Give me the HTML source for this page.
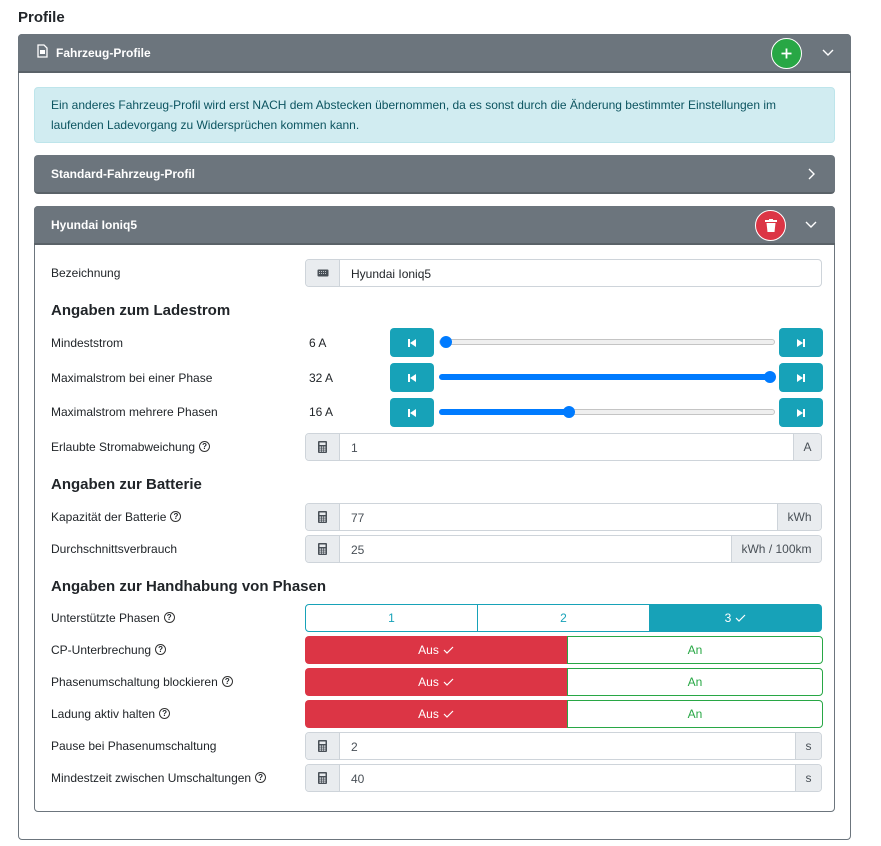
<!DOCTYPE html>
<html><head><meta charset="utf-8">
<style>
*{box-sizing:border-box;margin:0;padding:0}
body{width:881px;height:846px;background:#fff;font-family:"Liberation Sans",Arial,sans-serif;color:#212529;position:relative;overflow:hidden}
.a{position:absolute}
.h{background:#6c757d;color:#fff;font-weight:bold;font-size:12px;border-bottom:2px solid #5a6268}
.lbl{position:absolute;left:51px;font-size:12px;line-height:14px}
.sec{position:absolute;left:51px;font-size:15px;font-weight:bold;line-height:18px}
.ig{position:absolute;left:305px;width:517px;height:28px;border:1px solid #ced4da;border-radius:4px;background:#fff;font-size:12px;overflow:hidden}
.pre{position:absolute;left:0;top:0;bottom:0;width:34px;background:#e9ecef;border-right:1px solid #ced4da;display:flex;align-items:center;justify-content:center}
.val{position:absolute;left:45px;top:7px;color:#495057}
.app{position:absolute;right:0;top:0;bottom:0;background:#e9ecef;border-left:1px solid #ced4da;color:#495057;display:flex;align-items:center;justify-content:center}
.btn{position:absolute;width:44px;height:29px;background:#17a2b8;border-radius:4px;display:flex;align-items:center;justify-content:center}
.track{position:absolute;left:439px;width:336px;height:6px;border-radius:3px;background:#efefef;border:1px solid #c4c4c4}
.fill{position:absolute;left:-1px;top:-1px;height:6px;border-radius:3px;background:#007bff}
.knob{position:absolute;top:-4px;width:12px;height:12px;border-radius:50%;background:#007bff}
.q{position:relative;top:-1px;display:inline-block;width:11px;height:11px;border:1.2px solid #333;border-radius:50%;font-size:8px;line-height:9px;text-align:center;font-weight:bold;vertical-align:middle;margin-left:4px}
.seg{position:absolute;height:28px;font-size:12px;display:flex;align-items:center;justify-content:center}
.aus{left:305px;width:262px;background:#dc3545;color:#fff;border-radius:4px 0 0 4px}
.an{left:567px;width:256px;border:1px solid #28a745;color:#28a745;border-radius:0 4px 4px 0;background:#fff}
.ck{margin-left:4px}
</style></head><body>
<div class="a" style="left:18px;top:9px;font-size:15px;font-weight:bold">Profile</div>
<div class="a" style="left:18px;top:34px;width:833px;height:806px;border:1px solid #6c757d;border-radius:4px"></div>
<div class="a h" style="left:18px;top:34px;width:833px;height:39px;border-radius:4px 4px 0 0">
 <svg class="a" style="left:19px;top:10px" width="11" height="14" viewBox="0 0 11 14"><path d="M1 1h6l3 3v9H1z" fill="none" stroke="#fff" stroke-width="1.3"/><rect x="3" y="6" width="5" height="4" fill="#fff"/></svg>
 <span class="a" style="left:38px;top:12px">Fahrzeug-Profile</span>
 <div class="a" style="left:753px;top:4px;width:31px;height:31px;border-radius:50%;background:#28a745;border:1px solid #fff"><svg class="a" style="left:8px;top:8px" width="13" height="13"><path d="M6.5 1.5v10M1.5 6.5h10" stroke="#fff" stroke-width="1.8"/></svg></div>
 <svg class="a" style="left:804px;top:15px" width="12" height="8"><path d="M1 1l5 5 5-5" fill="none" stroke="#fff" stroke-width="1.4"/></svg>
</div>
<div class="a" style="left:34px;top:87px;width:801px;height:56px;background:#d1ecf1;border:1px solid #bee5eb;border-radius:4px;color:#0c5460;font-size:12px;line-height:20px;padding:7px 16px">Ein anderes Fahrzeug-Profil wird erst NACH dem Abstecken übernommen, da es sonst durch die Änderung bestimmter Einstellungen im laufenden Ladevorgang zu Widersprüchen kommen kann.</div>
<div class="a h" style="left:34px;top:155px;width:801px;height:39px;border-radius:4px">
 <span class="a" style="left:17px;top:12px">Standard-Fahrzeug-Profil</span>
 <svg class="a" style="left:774px;top:13px" width="8" height="12"><path d="M1 1l5 5-5 5" fill="none" stroke="#fff" stroke-width="1.4"/></svg>
</div>
<div class="a" style="left:34px;top:206px;width:801px;height:606px;border:1px solid #6c757d;border-radius:4px"></div>
<div class="a h" style="left:34px;top:206px;width:801px;height:39px;border-radius:4px 4px 0 0">
 <span class="a" style="left:17px;top:12px">Hyundai Ioniq5</span>
 <div class="a" style="left:721px;top:4px;width:31px;height:31px;border-radius:50%;background:#dc3545;border:1px solid #fff"><svg class="a" style="left:9px;top:8px" width="12" height="14"><rect x="0" y="1" width="12" height="2" fill="#fff"/><rect x="4" y="0" width="4" height="2" fill="#fff"/><path d="M1.5 4h9l-1 9h-7z" fill="#fff"/></svg></div>
 <svg class="a" style="left:771px;top:15px" width="12" height="8"><path d="M1 1l5 5 5-5" fill="none" stroke="#fff" stroke-width="1.4"/></svg>
</div>

<div class="lbl" style="top:266px">Bezeichnung</div>
<div class="ig" style="top:259px"><div class="pre"><svg width="12" height="8"><rect x=".5" y=".5" width="11" height="7" rx="1" fill="#495057"/><path d="M2 2.5h8M2 4.5h8" stroke="#e9ecef" stroke-width=".7" stroke-dasharray="1 1"/></svg></div><span class="val" style="color:#212529">Hyundai Ioniq5</span></div>

<div class="sec" style="top:302px">Angaben zum Ladestrom</div>

<div class="lbl" style="top:336px">Mindeststrom</div><div class="lbl" style="left:309px;top:336px">6 A</div>
<div class="lbl" style="top:371px">Maximalstrom bei einer Phase</div><div class="lbl" style="left:309px;top:371px">32 A</div>
<div class="lbl" style="top:405px">Maximalstrom mehrere Phasen</div><div class="lbl" style="left:309px;top:405px">16 A</div>

<div class="btn" style="left:390px;top:328px"><svg width="8" height="8"><rect x="0" y="0" width="2" height="8" fill="#fff"/><path d="M8 0v8L2 4z" fill="#fff"/></svg></div>
<div class="btn" style="left:779px;top:328px"><svg width="8" height="8"><rect x="6" y="0" width="2" height="8" fill="#fff"/><path d="M0 0v8l6-4z" fill="#fff"/></svg></div>
<div class="track" style="top:339px"><div class="knob" style="left:0"></div></div>

<div class="btn" style="left:390px;top:363px"><svg width="8" height="8"><rect x="0" y="0" width="2" height="8" fill="#fff"/><path d="M8 0v8L2 4z" fill="#fff"/></svg></div>
<div class="btn" style="left:779px;top:363px"><svg width="8" height="8"><rect x="6" y="0" width="2" height="8" fill="#fff"/><path d="M0 0v8l6-4z" fill="#fff"/></svg></div>
<div class="track" style="top:374px;border-color:#007bff;background:#007bff"><div class="knob" style="left:324px"></div></div>

<div class="btn" style="left:390px;top:398px"><svg width="8" height="8"><rect x="0" y="0" width="2" height="8" fill="#fff"/><path d="M8 0v8L2 4z" fill="#fff"/></svg></div>
<div class="btn" style="left:779px;top:398px"><svg width="8" height="8"><rect x="6" y="0" width="2" height="8" fill="#fff"/><path d="M0 0v8l6-4z" fill="#fff"/></svg></div>
<div class="track" style="top:409px"><div class="fill" style="width:131px"></div><div class="knob" style="left:123px"></div></div>

<div class="lbl" style="top:440px">Erlaubte Stromabweichung<span class="q">?</span></div>
<div class="ig" style="top:433px"><div class="pre">CALC</div><span class="val">1</span><div class="app" style="width:28px">A</div></div>

<div class="sec" style="top:476px">Angaben zur Batterie</div>
<div class="lbl" style="top:510px">Kapazität der Batterie<span class="q">?</span></div>
<div class="ig" style="top:503px"><div class="pre">CALC</div><span class="val">77</span><div class="app" style="width:44px">kWh</div></div>
<div class="lbl" style="top:542px">Durchschnittsverbrauch</div>
<div class="ig" style="top:535px"><div class="pre">CALC</div><span class="val">25</span><div class="app" style="width:90px">kWh / 100km</div></div>

<div class="sec" style="top:578px">Angaben zur Handhabung von Phasen</div>
<div class="lbl" style="top:611px">Unterstützte Phasen<span class="q">?</span></div>
<div class="seg" style="left:305px;top:604px;width:173px;border:1px solid #17a2b8;border-radius:4px 0 0 4px;color:#17a2b8">1</div>
<div class="seg" style="left:477px;top:604px;width:173px;border:1px solid #17a2b8;color:#17a2b8">2</div>
<div class="seg" style="left:649px;top:604px;width:173px;background:#17a2b8;color:#fff;border-radius:0 4px 4px 0">3<svg class="ck" width="11" height="8"><path d="M1 4l3 3 6-6" fill="none" stroke="#fff" stroke-width="1.2"/></svg></div>

<div class="lbl" style="top:643px">CP-Unterbrechung<span class="q">?</span></div>
<div class="seg aus" style="top:636px">Aus<svg class="ck" width="11" height="8"><path d="M1 4l3 3 6-6" fill="none" stroke="#fff" stroke-width="1.2"/></svg></div><div class="seg an" style="top:636px">An</div>
<div class="lbl" style="top:675px">Phasenumschaltung blockieren<span class="q">?</span></div>
<div class="seg aus" style="top:668px">Aus<svg class="ck" width="11" height="8"><path d="M1 4l3 3 6-6" fill="none" stroke="#fff" stroke-width="1.2"/></svg></div><div class="seg an" style="top:668px">An</div>
<div class="lbl" style="top:707px">Ladung aktiv halten<span class="q">?</span></div>
<div class="seg aus" style="top:700px">Aus<svg class="ck" width="11" height="8"><path d="M1 4l3 3 6-6" fill="none" stroke="#fff" stroke-width="1.2"/></svg></div><div class="seg an" style="top:700px">An</div>

<div class="lbl" style="top:739px">Pause bei Phasenumschaltung</div>
<div class="ig" style="top:732px"><div class="pre">CALC</div><span class="val">2</span><div class="app" style="width:26px">s</div></div>
<div class="lbl" style="top:771px">Mindestzeit zwischen Umschaltungen<span class="q">?</span></div>
<div class="ig" style="top:764px"><div class="pre">CALC</div><span class="val">40</span><div class="app" style="width:26px">s</div></div>

<script>
document.querySelectorAll('.pre').forEach(function(p){if(p.textContent==='CALC'){p.innerHTML='<svg width="9" height="12"><rect x="0" y="0" width="9" height="12" rx="1" fill="#495057"/><rect x="1.5" y="1.5" width="6" height="2.5" fill="#e9ecef"/><g fill="#e9ecef"><rect x="1.5" y="5.5" width="1.5" height="1.2"/><rect x="3.8" y="5.5" width="1.5" height="1.2"/><rect x="6" y="5.5" width="1.5" height="1.2"/><rect x="1.5" y="7.5" width="1.5" height="1.2"/><rect x="3.8" y="7.5" width="1.5" height="1.2"/><rect x="6" y="7.5" width="1.5" height="1.2"/><rect x="1.5" y="9.5" width="1.5" height="1.2"/><rect x="3.8" y="9.5" width="1.5" height="1.2"/><rect x="6" y="9.5" width="1.5" height="1.2"/></g></svg>';}});
</script>
</body></html>
